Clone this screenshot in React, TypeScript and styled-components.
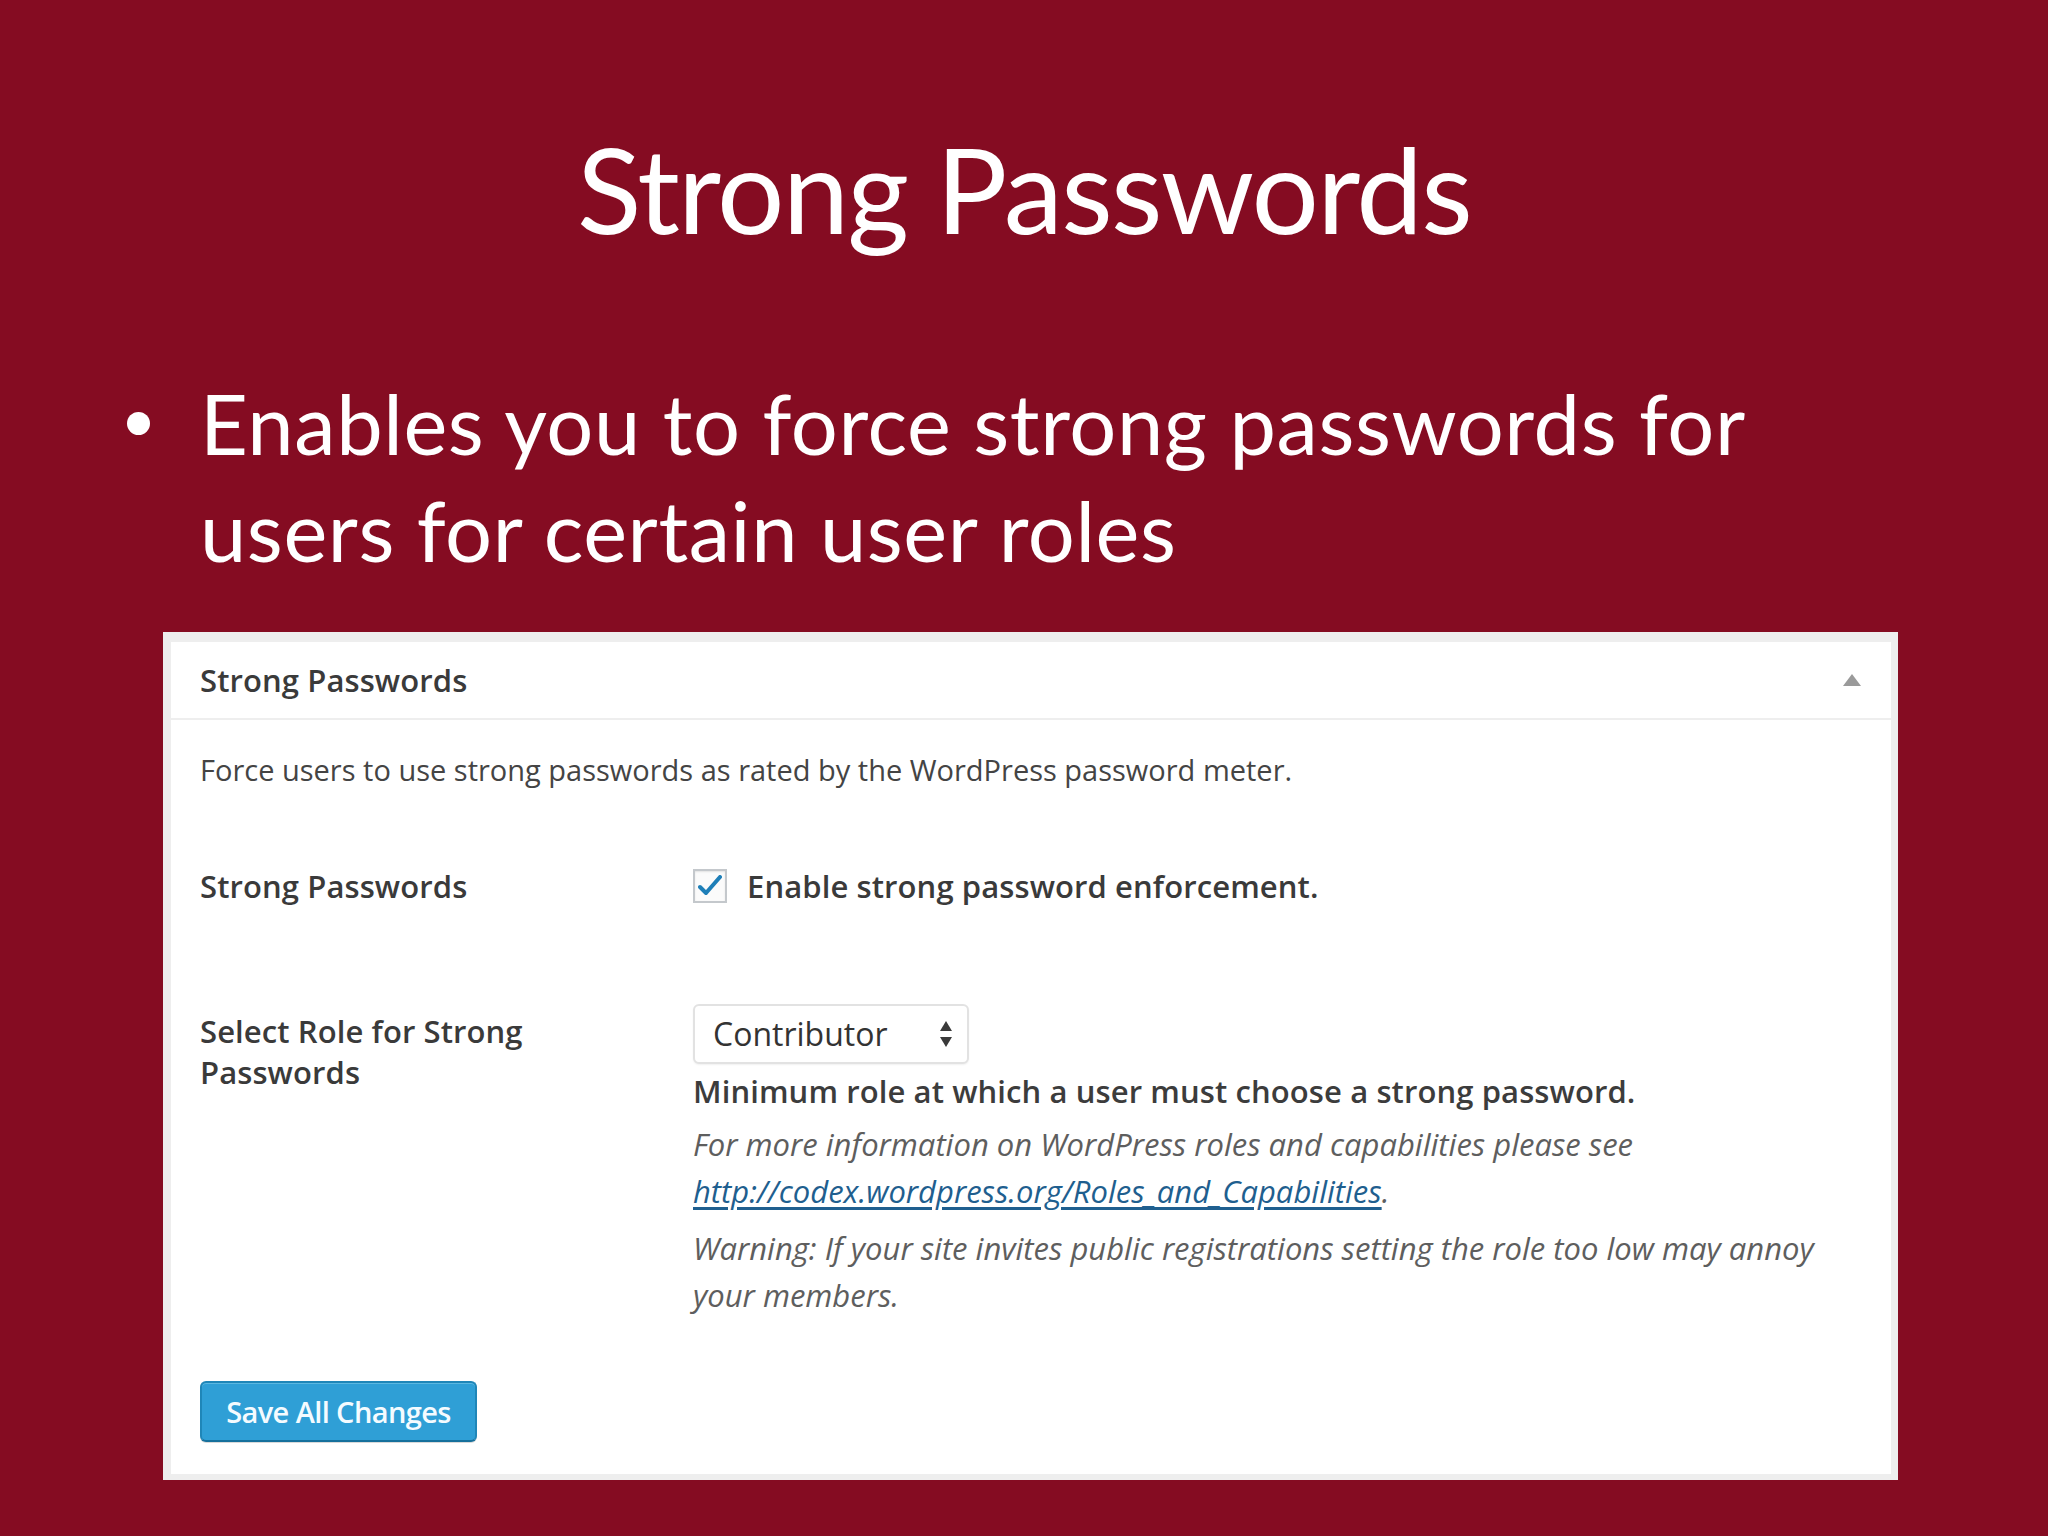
import React from "react";
import styled, { createGlobalStyle } from "styled-components";

const GlobalStyle = createGlobalStyle`
  html, body { margin: 0; padding: 0; background: #850c22; }
  * { box-sizing: border-box; }
`;

const Slide = styled.div`
  width: 2048px;
  height: 1536px;
  background: #850c22;
  display: flex;
  flex-direction: column;
  overflow: hidden;
`;

const Title = styled.h1`
  margin: 0;
  padding-top: 117px;
  font-family: Lato, "Open Sans", sans-serif;
  font-weight: 400;
  font-size: 119px;
  line-height: 1.2;
  letter-spacing: -1.8px;
  color: #ffffff;
  text-align: center;
`;

const BulletRow = styled.div`
  display: flex;
  align-items: flex-start;
  margin-top: 110px;
  padding-left: 127px;
`;

const BulletCol = styled.div`
  width: 73px;
  height: 107px;
  display: flex;
  align-items: center;
  flex-shrink: 0;
`;

const Dot = styled.span`
  width: 23px;
  height: 23px;
  border-radius: 50%;
  background: #ffffff;
`;

const BulletText = styled.p`
  margin: 0;
  font-family: Lato, "Open Sans", sans-serif;
  font-size: 83px;
  line-height: 107px;
  letter-spacing: 0.6px;
  color: #ffffff;
`;

const Frame = styled.div`
  margin: 48px 0 0 163px;
  width: 1735px;
  height: 848px;
  background: #eeeeee;
  padding: 10px 7px 6px 8px;
  display: flex;
`;

const Postbox = styled.div`
  flex: 1;
  background: #ffffff;
  display: flex;
  flex-direction: column;
  font-family: "Open Sans", "Noto Sans", sans-serif;
  color: #444444;
`;

const Header = styled.div`
  height: 78px;
  border-bottom: 2px solid #eeeeee;
  display: flex;
  align-items: center;
  justify-content: space-between;
  padding: 0 30px 0 29px;
`;

const HeaderTitle = styled.h3`
  margin: 0;
  font-size: 31px;
  font-weight: 600;
  letter-spacing: 0.1px;
  color: #3a3a3a;
`;

const Body = styled.div`
  padding: 0 29px;
  display: flex;
  flex-direction: column;
`;

const Intro = styled.p`
  margin: 30px 0 0;
  font-size: 29px;
  line-height: 40px;
  letter-spacing: 0;
  color: #444444;
`;

const FormRow = styled.div<{ $top: number }>`
  display: grid;
  grid-template-columns: 493px 1fr;
  margin-top: ${(p) => p.$top}px;
  align-items: start;
`;

const Label = styled.div<{ $pad?: number }>`
  font-size: 31px;
  font-weight: 600;
  line-height: 41px;
  letter-spacing: 0.1px;
  color: #3a3a3a;
  padding-top: ${(p) => p.$pad ?? 0}px;
`;

const CheckLine = styled.label`
  display: flex;
  align-items: center;
  gap: 20px;
  height: 41px;
  font-size: 31px;
  font-weight: 600;
  letter-spacing: 0.1px;
  color: #3a3a3a;
`;

const Box = styled.span`
  width: 34px;
  height: 34px;
  border: 2px solid #c4c8cc;
  background: #fbfbfb;
  box-shadow: inset 0 1px 2px rgba(0, 0, 0, 0.1);
  display: flex;
  align-items: center;
  justify-content: center;
  flex-shrink: 0;
`;

const FieldCol = styled.div`
  display: flex;
  flex-direction: column;
  align-items: flex-start;
`;

const Select = styled.div`
  width: 276px;
  height: 60px;
  border: 2px solid #e2e2e2;
  border-radius: 6px;
  background: #ffffff;
  box-shadow: 0 1px 2px rgba(0, 0, 0, 0.06);
  display: flex;
  align-items: center;
  justify-content: space-between;
  padding: 0 14px 0 18px;
  font-size: 32px;
  letter-spacing: 0;
  color: #333333;
`;

const Strongish = styled.p`
  margin: 4px 0 0;
  font-size: 31px;
  font-weight: 600;
  line-height: 47px;
  letter-spacing: 0.1px;
  color: #3c3c3c;
`;

const Note = styled.p<{ $top: number }>`
  margin: ${(p) => p.$top}px 0 0;
  font-size: 31px;
  font-style: italic;
  line-height: 47px;
  letter-spacing: 0;
  color: #5e5e5e;
`;

const Link = styled.a`
  color: #1f5f8f;
  text-decoration: underline;
  text-underline-offset: 4px;
`;

const Button = styled.button`
  margin-top: 62px;
  align-self: flex-start;
  width: 277px;
  height: 61px;
  border: 2px solid #1f86b8;
  border-bottom-color: #16709c;
  border-radius: 6px;
  background: #2f9fd6;
  box-shadow: inset 0 1px 0 rgba(120, 200, 232, 0.6), 0 1px 0 rgba(0, 0, 0, 0.15);
  color: #f4fbff;
  font-family: "Open Sans", "Noto Sans", sans-serif;
  font-size: 29px;
  font-weight: 600;
  letter-spacing: -0.6px;
  padding: 0;
`;

const Caret = () => (
  <svg width="18" height="12" viewBox="0 0 18 12">
    <path d="M9 0 L18 12 L0 12 Z" fill="#9a9a9a" />
  </svg>
);

const Check = () => (
  <svg width="24" height="22" viewBox="0 0 24 22">
    <path d="M2 12 L8 18 L22 2" fill="none" stroke="#1e7fb8" strokeWidth="4" strokeLinecap="round" strokeLinejoin="round" />
  </svg>
);

const Arrows = () => (
  <svg width="14" height="28" viewBox="0 0 14 28">
    <path d="M7 1 L13 11 L1 11 Z" fill="#3a3a3a" />
    <path d="M7 27 L13 17 L1 17 Z" fill="#3a3a3a" />
  </svg>
);

export default function App() {
  return (
    <>
      <GlobalStyle />
      <Slide>
        <Title>Strong Passwords</Title>
        <BulletRow>
          <BulletCol>
            <Dot />
          </BulletCol>
          <BulletText>
            Enables you to force strong passwords for
            <br />
            users for certain user roles
          </BulletText>
        </BulletRow>
        <Frame>
          <Postbox>
            <Header>
              <HeaderTitle>Strong Passwords</HeaderTitle>
              <Caret />
            </Header>
            <Body>
              <Intro>Force users to use strong passwords as rated by the WordPress password meter.</Intro>
              <FormRow $top={76}>
                <Label>Strong Passwords</Label>
                <CheckLine>
                  <Box>
                    <Check />
                  </Box>
                  Enable strong password enforcement.
                </CheckLine>
              </FormRow>
              <FormRow $top={97}>
                <Label $pad={7}>
                  Select Role for Strong
                  <br />
                  Passwords
                </Label>
                <FieldCol>
                  <Select>
                    <span>Contributor</span>
                    <Arrows />
                  </Select>
                  <Strongish>Minimum role at which a user must choose a strong password.</Strongish>
                  <Note $top={6}>
                    For more information on WordPress roles and capabilities please see
                    <br />
                    <Link href="#">http://codex.wordpress.org/Roles_and_Capabilities</Link>.
                  </Note>
                  <Note $top={10}>
                    Warning: If your site invites public registrations setting the role too low may annoy
                    <br />
                    your members.
                  </Note>
                </FieldCol>
              </FormRow>
              <Button>Save All Changes</Button>
            </Body>
          </Postbox>
        </Frame>
      </Slide>
    </>
  );
}
